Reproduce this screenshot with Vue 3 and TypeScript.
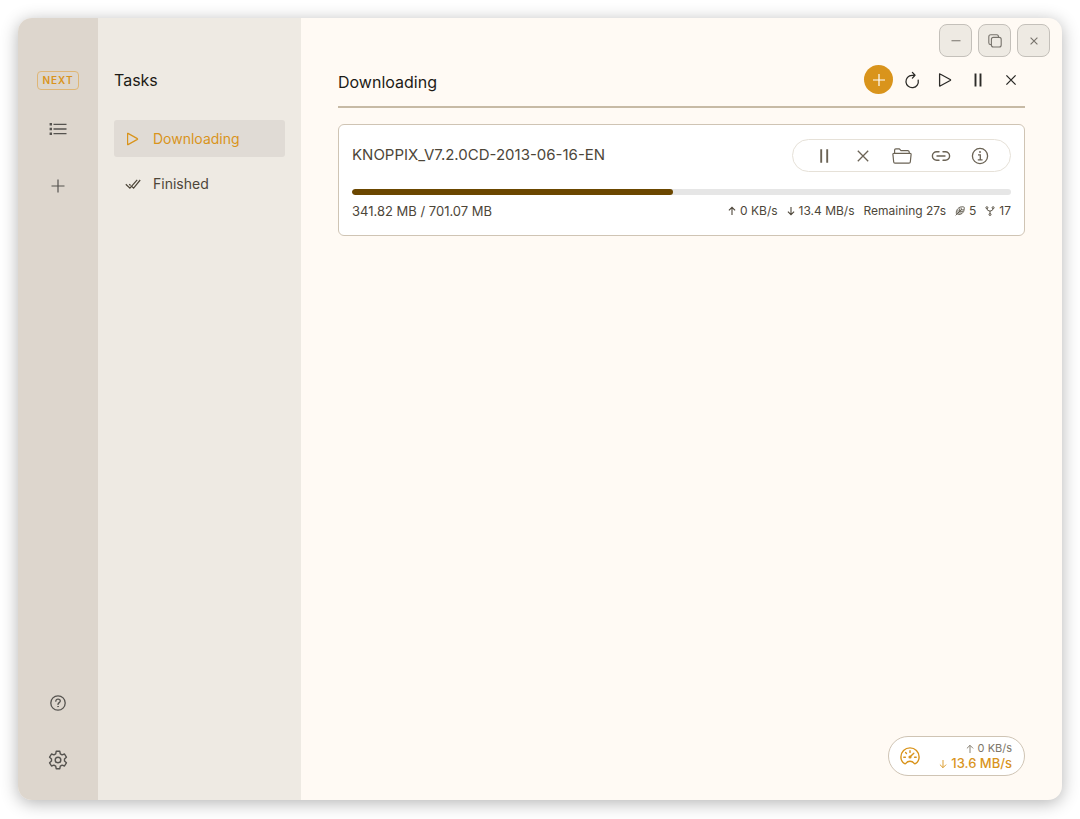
<script setup lang="ts">
import { computed, ref } from 'vue'

interface Task {
  name: string
  doneMb: number
  totalMb: number
  up: string
  down: string
  remaining: string
  seeders: number
  connections: number
}

const section = ref<'downloading' | 'finished'>('downloading')

const task: Task = {
  name: 'KNOPPIX_V7.2.0CD-2013-06-16-EN',
  doneMb: 341.82,
  totalMb: 701.07,
  up: '0 KB/s',
  down: '13.4 MB/s',
  remaining: 'Remaining 27s',
  seeders: 5,
  connections: 17,
}

const percent = computed(() => (task.doneMb / task.totalMb) * 100)
</script>

<template>
  <div class="desktop">
    <div class="window">
      <nav class="rail" aria-label="Main">
        <span class="brand">NEXT</span>
        <button class="rail-btn" type="button" aria-label="Tasks">
          <svg width="18" height="14" viewBox="0 0 18 14" fill="none" stroke="currentColor" stroke-width="1.3">
            <path d="M4.5 2.3H17.5M4.5 7H17.5M4.5 11.7H17.5" />
            <path d="M.6 2.3H3M.6 7H3M.6 11.7H3" stroke-width="2.4" />
          </svg>
        </button>
        <button class="rail-btn" type="button" aria-label="Add task">
          <svg width="14" height="14" viewBox="0 0 14 14" fill="none" stroke="currentColor" stroke-width="1.2">
            <path d="M7 .5V13.5M.5 7H13.5" />
          </svg>
        </button>
        <div class="spacer"></div>
        <button class="rail-btn" type="button" aria-label="Help">
          <svg width="16" height="16" viewBox="0 0 16 16" fill="none" stroke="currentColor" stroke-width="1.3" stroke-linecap="round">
            <circle cx="8" cy="8" r="7.2" />
            <path d="M5.8 6.2C5.8 4.9 6.7 4.1 8 4.1S10.3 4.9 10.3 6.1C10.3 7.6 8 7.7 8 9.4" />
            <circle cx="8" cy="11.6" r=".35" fill="currentColor" stroke-width=".8" />
          </svg>
        </button>
        <button class="rail-btn" type="button" aria-label="Settings">
          <svg width="20" height="20" viewBox="0 0 20 20" fill="none" stroke="currentColor" stroke-width="1.4" stroke-linejoin="round">
            <path d="M8.2 1.3H11.8L12.3 3.8L14.1 4.8L16.5 4L18.4 7.2L16.5 8.9V11.1L18.4 12.8L16.5 16L14.1 15.2L12.3 16.2L11.8 18.7H8.2L7.7 16.2L5.9 15.2L3.5 16L1.6 12.8L3.5 11.1V8.9L1.6 7.2L3.5 4L5.9 4.8L7.7 3.8Z" />
            <circle cx="10" cy="10" r="2.8" />
          </svg>
        </button>
      </nav>

      <aside class="sections">
        <h2 class="heading">Tasks</h2>
        <button class="section" :class="{ active: section === 'downloading' }" type="button" @click="section = 'downloading'">
          <svg width="16" height="14" viewBox="0 0 16 14" fill="none" stroke="currentColor" stroke-width="1.2" stroke-linejoin="round">
            <path d="M2.6 1.6V12.4Q2.6 12.8 3 12.6L12.4 7.4Q12.9 7 12.4 6.6L3 1.4Q2.6 1.2 2.6 1.6Z" />
          </svg>
          Downloading
        </button>
        <button class="section" :class="{ active: section === 'finished' }" type="button" @click="section = 'finished'">
          <svg width="16" height="14" viewBox="0 0 16 14" fill="none" stroke="currentColor" stroke-width="1.2">
            <path d="M.8 7.2L4.9 11.2L12.2 2.8M4.2 7.2L5.6 8.5M7 9.6L8.6 11.2L15.2 3" />
          </svg>
          Finished
        </button>
      </aside>

      <main class="main">
        <div class="titlebar">
          <button class="win-btn" type="button" aria-label="Minimize">
            <svg width="14" height="14" viewBox="0 0 14 14" fill="none" stroke="currentColor" stroke-width="1.1"><path d="M2.5 6.8H11.5" /></svg>
          </button>
          <button class="win-btn" type="button" aria-label="Maximize">
            <svg width="14" height="14" viewBox="0 0 14 14" fill="none" stroke="currentColor" stroke-width="1.1">
              <rect x="3.4" y="3.4" width="9.8" height="9.6" rx="2" />
              <path d="M3.4 10.6H2.6Q.8 10.6 .8 8.8V2.8Q.8 .8 2.8 .8H8.8Q10.5 .8 10.6 3.4" />
            </svg>
          </button>
          <button class="win-btn" type="button" aria-label="Close">
            <svg width="14" height="14" viewBox="0 0 14 14" fill="none" stroke="currentColor" stroke-width="1.1"><path d="M3.6 3.6L10.4 10.4M10.4 3.6L3.6 10.4" /></svg>
          </button>
        </div>

        <div class="content">
          <header class="header">
            <h1 class="heading">Downloading</h1>
            <div class="toolbar">
              <button class="tool primary" type="button" aria-label="New download">
                <svg width="14" height="14" viewBox="0 0 14 14" fill="none" stroke="currentColor" stroke-width="1.2"><path d="M7 1V13M1 7H13" /></svg>
              </button>
              <button class="tool" type="button" aria-label="Refresh">
                <svg width="16" height="18" viewBox="0 0 16 18" fill="none" stroke="currentColor" stroke-width="1.3" stroke-linecap="round" stroke-linejoin="round">
                  <path d="M14.2 9.2A6.2 6.2 0 1 1 8 4.3H10.6M8.4 1.4L11 4.3L8.4 7.1" />
                </svg>
              </button>
              <button class="tool" type="button" aria-label="Resume all">
                <svg width="16" height="16" viewBox="0 0 16 16" fill="none" stroke="currentColor" stroke-width="1.3" stroke-linejoin="round">
                  <path d="M2.6 2.2V13.8Q2.6 14.3 3.1 14L13.2 8.5Q14 8 13.2 7.5L3.1 2Q2.6 1.7 2.6 2.2Z" />
                </svg>
              </button>
              <button class="tool" type="button" aria-label="Pause all">
                <svg width="14" height="14" viewBox="0 0 14 14" fill="none" stroke="currentColor" stroke-width="1.9"><path d="M4.5 .6V13.4M9.5 .6V13.4" /></svg>
              </button>
              <button class="tool" type="button" aria-label="Remove all">
                <svg width="14" height="14" viewBox="0 0 14 14" fill="none" stroke="currentColor" stroke-width="1.3"><path d="M2.4 2.4L11.6 11.6M11.6 2.4L2.4 11.6" /></svg>
              </button>
            </div>
          </header>

          <article class="card">
            <div class="card-top">
              <h3 class="name">{{ task.name }}</h3>
              <div class="actions">
                <button class="action" type="button" aria-label="Pause">
                  <svg width="16" height="16" viewBox="0 0 16 16" fill="none" stroke="currentColor" stroke-width="1.9"><path d="M5.2 1.2V14.8M11.2 1.2V14.8" /></svg>
                </button>
                <button class="action" type="button" aria-label="Remove">
                  <svg width="14" height="14" viewBox="0 0 14 14" fill="none" stroke="currentColor" stroke-width="1.3"><path d="M1.8 1.8L12.2 12.2M12.2 1.8L1.8 12.2" /></svg>
                </button>
                <button class="action" type="button" aria-label="Open folder">
                  <svg width="20" height="18" viewBox="0 0 20 18" fill="none" stroke="currentColor" stroke-width="1.2" stroke-linejoin="round">
                    <path d="M2.6 6.4V3Q2.6 1.8 3.8 1.8H7.4L9 3.6H15.8Q17 3.6 17.2 4.8L17.3 6.4" />
                    <path d="M2 6.4H18Q19.2 6.4 19.1 7.4L18.3 15Q18.2 16.2 17 16.2H3Q1.8 16.2 1.7 15L.9 7.4Q.8 6.4 2 6.4Z" />
                  </svg>
                </button>
                <button class="action" type="button" aria-label="Copy link">
                  <svg width="20" height="14" viewBox="0 0 20 14" fill="none" stroke="currentColor" stroke-width="1.4" stroke-linecap="round">
                    <path d="M8 2.7H5.7A4.3 4.3 0 0 0 5.7 11.3H8M12 2.7H14.3A4.3 4.3 0 0 1 14.3 11.3H12M6 7H14" />
                  </svg>
                </button>
                <button class="action" type="button" aria-label="Details">
                  <svg width="18" height="18" viewBox="0 0 18 18" fill="none" stroke="currentColor" stroke-width="1.3">
                    <circle cx="9" cy="9" r="7.6" />
                    <path d="M7 7.8H9.3V12.8M6.8 12.8H11.6" />
                    <circle cx="9" cy="5" r=".7" fill="currentColor" stroke-width=".6" />
                  </svg>
                </button>
              </div>
            </div>

            <div class="track" role="progressbar" :aria-valuenow="Math.round(percent)" aria-valuemin="0" aria-valuemax="100">
              <div class="fill" :style="{ width: percent + '%' }"></div>
            </div>

            <div class="stats">
              <span class="size">{{ task.doneMb }} MB / {{ task.totalMb }} MB</span>
              <div class="stats-right">
                <span class="stat">
                  <svg width="8" height="10" viewBox="0 0 8 10" fill="none" stroke="currentColor" stroke-width="1.1"><path d="M4 9V1.4M.9 4.4L4 1.3L7.1 4.4" /></svg>
                  {{ task.up }}
                </span>
                <span class="stat">
                  <svg width="8" height="10" viewBox="0 0 8 10" fill="none" stroke="currentColor" stroke-width="1.1"><path d="M4 1V8.6M.9 5.6L4 8.7L7.1 5.6" /></svg>
                  {{ task.down }}
                </span>
                <span class="stat">{{ task.remaining }}</span>
                <span class="stat">
                  <svg width="10" height="10" viewBox="0 0 10 10" fill="none" stroke="currentColor" stroke-width=".8">
                    <path d="M.6 9.4L6.4 3.6M1.6 8.2C.4 5.6 2.6 1.2 6.4 .8Q8.6 .6 9.2 1.2Q9.6 3.6 8.6 5.6C7.2 8.4 4 9.2 2.2 8M3 7V3.6M4.6 5.4V2.4M6.2 3.8V1.6M3 7H6.8M4.6 5.4H8.2M6.2 3.8H9" />
                  </svg>
                  {{ task.seeders }}
                </span>
                <span class="stat">
                  <svg width="10" height="10" viewBox="0 0 10 10" fill="none" stroke="currentColor" stroke-width=".9">
                    <circle cx="1.9" cy="1.7" r="1" /><circle cx="8.1" cy="1.7" r="1" /><circle cx="5" cy="8.5" r="1" />
                    <path d="M1.9 2.7Q2 4.8 5 5.1Q8 4.8 8.1 2.7M5 5V7.5" />
                  </svg>
                  {{ task.connections }}
                </span>
              </div>
            </div>
          </article>

          <div class="speed">
            <svg width="20" height="18" viewBox="0 0 20 18" fill="none" stroke="currentColor" stroke-width="1.4" stroke-linecap="round" stroke-linejoin="round">
              <path d="M4.6 16.6C2.2 15.2 .9 12.8 .9 10A9.1 9.1 0 0 1 19.1 10C19.1 12.8 17.8 15.2 15.4 16.6Q14.6 16.9 14 16.2Q12.6 14.2 10 14.2T6 16.2Q5.4 16.9 4.6 16.6Z" />
              <path d="M10 3.8V5.4M5.6 5.6L6.5 6.5M3.8 10.2H5.4M14.6 10.2H16.2M13.8 6.2L10.4 9.6" />
              <circle cx="10" cy="10" r=".9" fill="currentColor" />
            </svg>
            <div class="speed-values">
              <span class="speed-up">
                <svg width="8" height="10" viewBox="0 0 8 10" fill="none" stroke="currentColor" stroke-width=".9"><path d="M4 9V1.4M.9 4.4L4 1.3L7.1 4.4" /></svg>
                0 KB/s
              </span>
              <span class="speed-down">
                <svg width="8" height="10" viewBox="0 0 8 10" fill="none" stroke="currentColor" stroke-width=".9"><path d="M4 1V8.6M.9 5.6L4 8.7L7.1 5.6" /></svg>
                13.6 MB/s
              </span>
            </div>
          </div>
        </div>
      </main>
    </div>
  </div>
</template>

<style>
body {
  background: #fff;
}
</style>

<style scoped>
.desktop {
  box-sizing: border-box;
  display: flex;
  min-height: 100vh;
  padding: 18px 18px 19px;
  font-family: Inter, "Liberation Sans", sans-serif;
  color: #4d4639;
}

.window {
  display: flex;
  flex: 1;
  overflow: hidden;
  border-radius: 14px;
  background: #fffaf4;
  box-shadow: 0 3px 17px rgba(0, 0, 0, 0.3);
}

button {
  display: flex;
  align-items: center;
  justify-content: center;
  box-sizing: border-box;
  margin: 0;
  padding: 0;
  border: 0;
  background: none;
  color: inherit;
  font: inherit;
  cursor: pointer;
}

svg {
  flex: none;
  display: block;
}

.heading {
  margin: 0;
  font-size: 16px;
  font-weight: 400;
  line-height: 24px;
  color: #1d1b16;
}

.rail {
  display: flex;
  flex-direction: column;
  align-items: center;
  gap: 20px;
  box-sizing: border-box;
  width: 80px;
  padding: 53px 0 22px;
  background: #ddd6cd;
  color: #55534f;
}

.brand {
  box-sizing: border-box;
  padding: 0 4px;
  border: 1px solid #dfb676;
  border-radius: 4px;
  font-size: 10px;
  font-weight: 600;
  line-height: 17px;
  letter-spacing: 1px;
  color: #d9941c;
}

.rail-btn {
  width: 37px;
  height: 37px;
}

.spacer {
  flex: 1;
}

.sections {
  display: flex;
  flex-direction: column;
  gap: 8px;
  box-sizing: border-box;
  width: 203px;
  padding: 50px 16px 0;
  background: #eeeae3;
}

.sections .heading {
  margin-bottom: 20px;
}

.section {
  justify-content: flex-start;
  gap: 12px;
  height: 37px;
  padding: 0 11px;
  border-radius: 3px;
  font-size: 14px;
}

.section.active {
  background: #e0dbd5;
  color: #d9941c;
}

.main {
  display: flex;
  flex: 1;
  flex-direction: column;
  min-width: 0;
}

.titlebar {
  display: flex;
  justify-content: flex-end;
  gap: 6px;
  padding: 6px 12px 0;
}

.win-btn {
  width: 33px;
  height: 33px;
  border: 1px solid #c4c0ba;
  border-radius: 8px;
  background: #eeeae3;
  color: #77736c;
}

.content {
  display: flex;
  flex: 1;
  flex-direction: column;
  padding: 8px 37px 24px;
}

.header {
  display: flex;
  align-items: flex-end;
  justify-content: space-between;
  padding-bottom: 12px;
  border-bottom: 2px solid #c7baa5;
}

.toolbar {
  display: flex;
  gap: 4px;
}

.tool {
  width: 29px;
  height: 29px;
  border-radius: 50%;
  color: #2c2b28;
}

.tool.primary {
  background: #d9941c;
  color: #fff;
}

.card {
  margin-top: 16px;
  padding: 14px 13px 16px;
  border: 1px solid #cfc4b4;
  border-radius: 6px;
  background: #fff;
}

.card-top {
  display: flex;
  align-items: flex-start;
  justify-content: space-between;
}

.name {
  margin: 0;
  font-size: 15px;
  font-weight: 400;
  line-height: 32px;
}

.actions {
  display: flex;
  padding: 0 11px;
  border: 1px solid #e6e1d8;
  border-radius: 17px;
  color: #6b6355;
}

.action {
  width: 39px;
  height: 31px;
}

.track {
  height: 6px;
  margin-top: 17px;
  overflow: hidden;
  border-radius: 3px;
  background: #e6e6e6;
}

.fill {
  height: 100%;
  border-radius: 3px;
  background: #6b4700;
}

.stats {
  display: flex;
  justify-content: space-between;
  margin-top: 8px;
  font-size: 12px;
  line-height: 16px;
}

.size {
  font-size: 13px;
}

.stats-right {
  display: flex;
  gap: 9px;
}

.stat {
  display: flex;
  align-items: center;
  gap: 4px;
}

.speed {
  display: flex;
  align-items: center;
  justify-content: space-between;
  align-self: flex-end;
  box-sizing: border-box;
  width: 137px;
  height: 40px;
  margin-top: auto;
  padding: 0 12px 0 11px;
  border: 1px solid #cfc4b4;
  border-radius: 20px;
  background: #fff;
  color: #d9941c;
}

.speed-values {
  display: flex;
  flex-direction: column;
  align-items: flex-end;
}

.speed-up,
.speed-down {
  display: flex;
  align-items: center;
  gap: 4px;
  line-height: 15px;
}

.speed-up {
  font-size: 11px;
  color: #7d7668;
}

.speed-down {
  font-size: 13px;
  font-weight: 500;
}
</style>
